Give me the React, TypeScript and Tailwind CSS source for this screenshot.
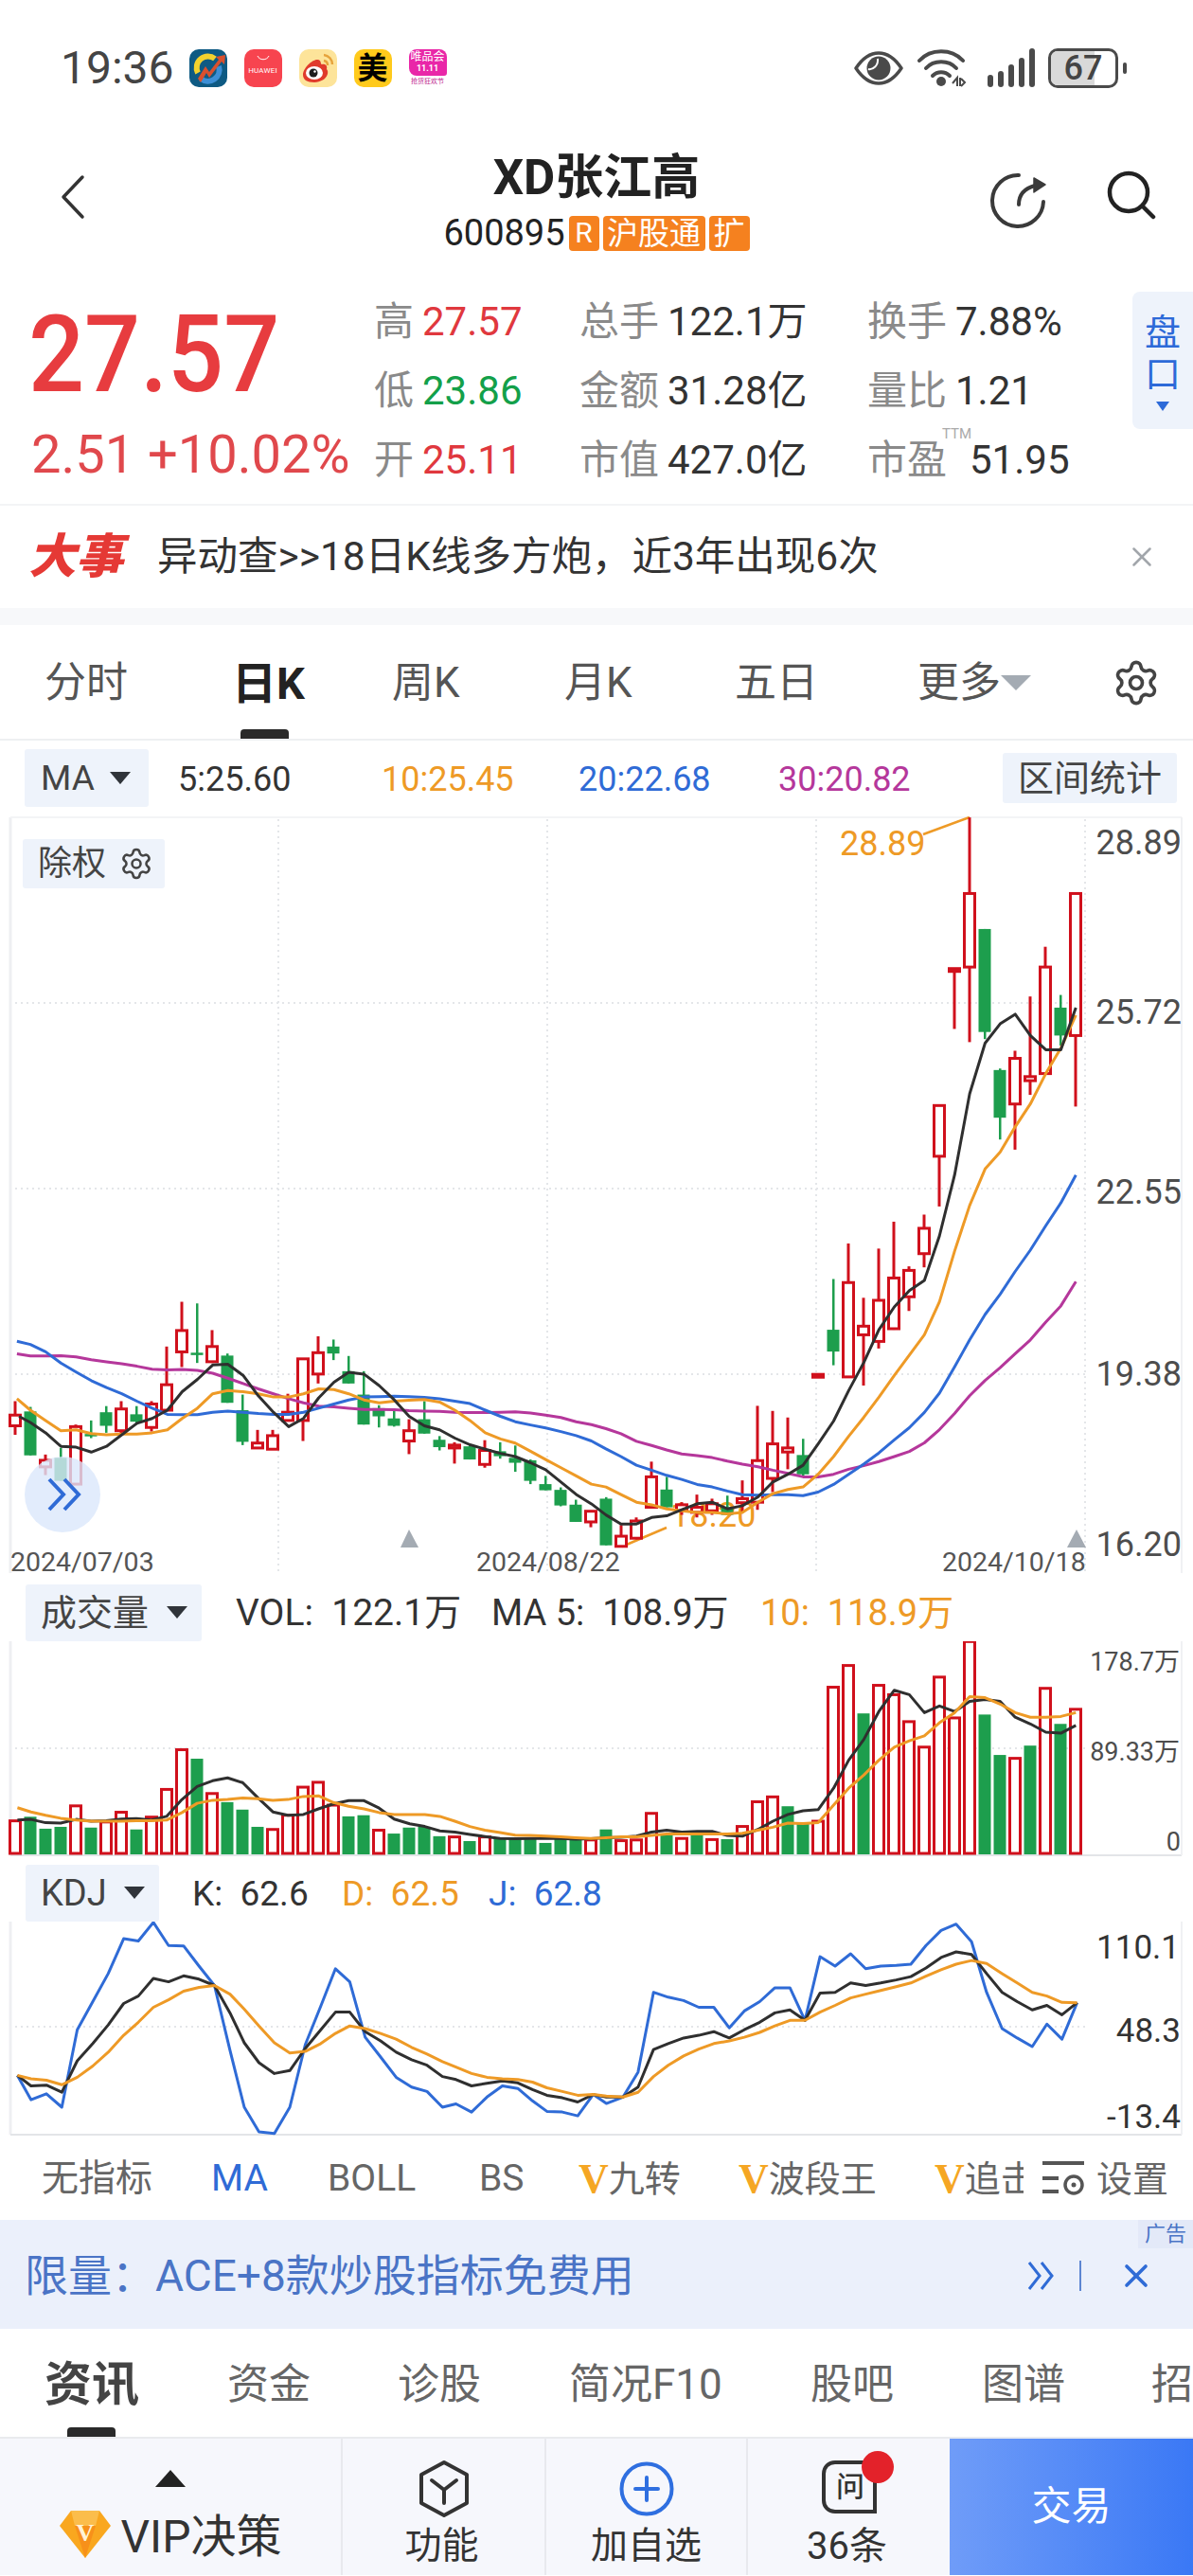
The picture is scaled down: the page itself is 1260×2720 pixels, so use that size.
import React from 'react';
import { Settings, X } from 'lucide-react';

type Pt = [number, number];
type Candle = ['r' | 'g', number, number, number, number];

const RED = '#d0101c';
const GREEN = '#1d9e4d';
const BLACK = '#2f2f2f';
const ORANGE = '#ee9a26';
const BLUE = '#2f6bd6';
const PURPLE = '#b5379b';

// measured from crops of the picture, converted to page pixels below
const z3 = (p: Pt): Pt => [p[0] / 2.24, 1000 + p[1] / 2.306];
const z4 = (p: Pt): Pt => [620 + p[0] / 2.45, 840 + p[1] / 1.867];
const z5 = (p: Pt): Pt => [p[0] / 2.45, 1660 + p[1] / 2.53];
const z6 = (p: Pt): Pt => [620 + p[0] / 2.45, 1660 + p[1] / 2.53];

const joinLeft = (left: Pt[], right: Pt[]) => {
  const a = left.filter((p) => p[0] <= 1400).map(z3);
  const b = right.filter((p) => p[0] >= 49).map(z4);
  return [...a, ...b];
};
const joinLow = (left: Pt[], right: Pt[]) => {
  const a = left.filter((p) => p[0] <= 1536).map(z5);
  const b = right.filter((p) => p[0] >= 49).map(z6);
  return [...a, ...b];
};

const candlesLeft: Candle[] = [
  ['r', 1108, 1190, 1142, 1168], ['g', 1122, 1240, 1133, 1240], ['r', 1238, 1288, 1252, 1268], ['g', 1222, 1302, 1246, 1302],
  ['r', 1165, 1310, 1170, 1310], ['g', 1155, 1198, 1188, 1192], ['g', 1120, 1185, 1135, 1168], ['r', 1108, 1190, 1127, 1180],
  ['g', 1120, 1165, 1140, 1158], ['r', 1108, 1182, 1115, 1172], ['r', 975, 1130, 1068, 1130], ['r', 866, 1025, 936, 988],
  ['g', 870, 1015, 990, 995], ['r', 935, 1015, 975, 1012], ['g', 992, 1112, 997, 1112], ['g', 1092, 1215, 1130, 1207],
  ['r', 1178, 1222, 1210, 1222], ['r', 1178, 1225, 1192, 1225], ['r', 1090, 1155, 1135, 1155], ['r', 1005, 1205, 1005, 1155],
  ['r', 950, 1065, 990, 1042], ['g', 958, 1008, 975, 992], ['g', 998, 1065, 1035, 1065], ['g', 1035, 1165, 1092, 1165],
  ['g', 1118, 1172, 1125, 1145], ['g', 1132, 1170, 1150, 1168], ['r', 1152, 1237, 1180, 1205], ['g', 1108, 1187, 1152, 1187],
  ['g', 1193, 1228, 1202, 1220], ['r', 1208, 1260, 1215, 1222], ['g', 1215, 1250, 1218, 1250], ['r', 1203, 1270, 1228, 1262],
  ['g', 1208, 1248, 1230, 1242], ['g', 1216, 1280, 1246, 1258], ['g', 1250, 1310, 1252, 1302], ['g', 1290, 1325, 1310, 1325],
  ['g', 1318, 1364, 1324, 1362], ['g', 1348, 1402, 1360, 1402], ['r', 1376, 1415, 1376, 1402],
];

const candlesRight: Candle[] = [
  ['g', 1385, 1480, 1388, 1480], ['r', 1440, 1482, 1462, 1482], ['r', 1425, 1468, 1432, 1466], ['r', 1315, 1405, 1345, 1405],
  ['g', 1345, 1405, 1370, 1405], ['r', 1395, 1420, 1400, 1412], ['r', 1380, 1425, 1405, 1415], ['r', 1388, 1420, 1398, 1412],
  ['g', 1382, 1420, 1405, 1420], ['r', 1352, 1415, 1388, 1396], ['r', 1205, 1410, 1313, 1395], ['r', 1215, 1375, 1280, 1348],
  ['r', 1228, 1330, 1288, 1296], ['g', 1270, 1345, 1302, 1340], ['r', 1143, 1148, 1143, 1148], ['g', 955, 1125, 1055, 1098],
  ['r', 885, 1148, 962, 1148], ['r', 992, 1165, 1048, 1065], ['r', 895, 1092, 997, 1078], ['r', 842, 1055, 953, 1053],
  ['r', 930, 1018, 938, 990], ['r', 828, 932, 855, 905], ['r', 613, 812, 613, 713], ['r', 343, 462, 343, 347],
  ['r', 45, 488, 195, 340], ['g', 265, 482, 265, 468], ['g', 540, 680, 543, 637], ['r', 505, 700, 520, 610],
  ['r', 398, 592, 556, 564], ['r', 300, 552, 340, 550], ['g', 395, 495, 420, 475], ['r', 195, 615, 195, 475],
];

const candles = [
  ...candlesLeft.map((c) => [c[0], ...c.slice(1).map((y) => 1000 + (y as number) / 2.306)] as Candle),
  ...candlesRight.map((c) => [c[0], ...c.slice(1).map((y) => 840 + (y as number) / 1.867)] as Candle),
];

const ma5 = joinLeft(
  [[45,1145],[72,1160],[108,1185],[144,1218],[180,1220],[216,1232],[252,1218],[288,1190],[324,1162],[360,1150],[396,1130],[431,1085],[467,1055],[503,1020],[539,1018],[575,1045],[611,1095],[647,1135],[683,1170],[718,1150],[754,1100],[790,1062],[825,1038],[861,1042],[897,1070],[933,1105],[968,1145],[1004,1168],[1040,1178],[1076,1198],[1112,1214],[1148,1225],[1184,1235],[1219,1243],[1255,1258],[1291,1275],[1327,1305],[1363,1335],[1399,1358]],
  [[49,1420],[88,1438],[128,1438],[167,1425],[206,1422],[245,1410],[285,1398],[324,1395],[363,1408],[402,1402],[442,1385],[481,1355],[520,1340],[559,1322],[598,1280],[638,1235],[677,1175],[716,1120],[755,1055],[795,1010],[834,978],[873,958],[912,870],[951,750],[990,590],[1030,490],[1069,452],[1108,433],[1147,475],[1187,503],[1226,503],[1265,420]],
);
const ma10 = joinLeft(
  [[40,1102],[72,1130],[108,1155],[144,1180],[180,1178],[216,1187],[252,1190],[288,1188],[324,1188],[360,1185],[396,1178],[431,1150],[467,1125],[503,1090],[539,1082],[575,1085],[611,1090],[647,1098],[683,1098],[718,1090],[754,1078],[790,1080],[825,1090],[861,1105],[897,1112],[933,1108],[968,1106],[1004,1104],[1040,1110],[1076,1130],[1112,1155],[1148,1185],[1184,1200],[1219,1210],[1255,1230],[1291,1250],[1327,1270],[1363,1290],[1399,1310]],
  [[49,1365],[88,1380],[128,1395],[167,1400],[206,1408],[245,1412],[285,1415],[324,1415],[363,1418],[402,1415],[442,1395],[481,1378],[520,1370],[559,1365],[598,1340],[638,1305],[677,1265],[716,1228],[755,1188],[795,1145],[834,1105],[873,1065],[912,1000],[951,900],[990,810],[1030,738],[1069,705],[1108,655],[1147,610],[1187,550],[1226,500],[1265,435]],
);
const ma20 = joinLeft(
  [[40,962],[72,970],[108,988],[144,1015],[180,1037],[216,1058],[252,1075],[288,1090],[324,1108],[360,1125],[396,1140],[431,1141],[467,1141],[503,1135],[539,1132],[575,1135],[611,1138],[647,1140],[683,1140],[718,1135],[754,1125],[790,1115],[825,1105],[861,1098],[897,1097],[933,1096],[968,1097],[1004,1099],[1040,1102],[1076,1108],[1112,1114],[1148,1130],[1184,1145],[1219,1158],[1255,1166],[1291,1173],[1327,1182],[1363,1192],[1399,1205]],
  [[49,1290],[88,1305],[128,1322],[167,1332],[206,1342],[245,1350],[285,1360],[324,1365],[363,1373],[402,1380],[442,1381],[481,1380],[520,1380],[559,1382],[598,1375],[638,1360],[677,1340],[716,1320],[755,1298],[795,1272],[834,1248],[873,1218],[912,1180],[951,1128],[990,1075],[1030,1025],[1069,985],[1108,940],[1147,898],[1187,850],[1226,805],[1265,750]],
);
const ma30 = joinLeft(
  [[40,993],[72,998],[108,998],[144,997],[180,1000],[216,1007],[252,1012],[288,1017],[324,1023],[360,1030],[396,1032],[431,1031],[467,1033],[503,1040],[539,1052],[575,1065],[611,1078],[647,1090],[683,1102],[718,1112],[754,1120],[790,1122],[825,1125],[861,1128],[897,1128],[933,1129],[968,1131],[1004,1132],[1040,1133],[1076,1135],[1112,1136],[1148,1136],[1184,1135],[1219,1134],[1255,1137],[1291,1142],[1327,1148],[1363,1158],[1399,1165]],
  [[49,1250],[88,1260],[128,1275],[167,1283],[206,1292],[245,1300],[285,1303],[324,1307],[363,1314],[402,1320],[442,1325],[481,1332],[520,1338],[559,1345],[598,1345],[638,1340],[677,1330],[716,1323],[755,1315],[795,1305],[834,1295],[873,1278],[912,1252],[951,1220],[990,1185],[1030,1155],[1069,1130],[1108,1102],[1147,1075],[1187,1040],[1226,1008],[1265,960]],
);

// 'r' bars are hollow, 'g' are filled
const volumes: ['r' | 'g', number][] = [
  ['r',667],['g',656],['g',688],['g',683],['r',627],['g',685],['r',670],['r',644],['g',690],['r',657],['r',583],['r',477],['g',501],['r',594],['g',617],['g',637],['g',683],['r',690],['r',652],['r',577],['r',564],['r',625],['g',655],['g',652],['r',692],['g',701],['g',685],['g',683],['g',708],['r',710],['g',721],['r',710],['g',712],['g',715],['g',712],['g',726],['g',716],['g',716],['r',718],['g',690],
  ['r',720],['r',718],['r',647],['g',705],['r',714],['g',705],['r',717],['g',716],['r',682],['r',616],['r',603],['g',628],['g',672],['r',668],['r',310],['r',252],['g',380],['r',305],['r',330],['r',402],['r',470],['r',283],['r',392],['r',188],['g',383],['g',491],['r',500],['g',466],['r',313],['g',408],['r',369],
];

const volMa5 = joinLow(
  [[45,665],[80,663],[118,672],[157,673],[197,663],[236,668],[275,667],[314,662],[353,661],[392,665],[431,655],[471,610],[510,575],[550,560],[589,552],[628,565],[667,605],[706,643],[745,652],[785,650],[824,635],[863,622],[902,613],[942,613],[981,633],[1020,662],[1060,675],[1099,682],[1138,694],[1177,697],[1216,703],[1255,709],[1294,714],[1333,715],[1372,714],[1412,714],[1451,714],[1490,716],[1529,715]],
  [[49,712],[88,711],[128,708],[167,697],[206,692],[245,697],[285,695],[324,695],[363,706],[402,708],[442,690],[481,668],[520,650],[559,640],[598,637],[638,580],[677,505],[716,450],[755,375],[795,318],[834,330],[873,378],[912,360],[951,375],[990,348],[1030,343],[1069,348],[1108,390],[1147,408],[1187,430],[1226,433],[1265,412]],
);
const volMa10 = joinLow(
  [[45,632],[80,643],[118,652],[157,660],[197,665],[236,668],[275,668],[314,668],[353,667],[392,667],[431,665],[471,645],[510,620],[550,612],[589,610],[628,606],[667,608],[706,612],[745,610],[785,602],[824,600],[863,618],[902,628],[942,635],[981,645],[1020,650],[1060,650],[1099,650],[1138,655],[1177,668],[1216,682],[1255,692],[1294,698],[1333,705],[1372,706],[1412,708],[1451,710],[1490,712],[1529,714]],
  [[49,712],[88,710],[128,710],[167,706],[206,702],[245,702],[285,702],[324,702],[363,702],[402,700],[442,692],[481,684],[520,673],[559,674],[598,672],[638,625],[677,580],[716,545],[755,505],[795,470],[834,453],[873,440],[912,405],[951,378],[990,335],[1030,338],[1069,355],[1108,378],[1147,390],[1187,390],[1226,388],[1265,378]],
);

const kdjK = joinLow(
  [[45,1347],[80,1375],[120,1373],[160,1392],[200,1308],[240,1262],[280,1212],[320,1155],[358,1135],[397,1088],[436,1097],[475,1081],[515,1090],[555,1107],[595,1180],[632,1260],[670,1313],[710,1342],[750,1334],[790,1275],[830,1225],[868,1178],[905,1178],[945,1230],[985,1255],[1025,1285],[1065,1305],[1105,1320],[1145,1350],[1180,1358],[1220,1375],[1260,1368],[1300,1362],[1340,1367],[1378,1385],[1415,1400],[1455,1407],[1495,1418],[1535,1398]],
  [[50,1405],[93,1405],[132,1378],[172,1278],[210,1262],[250,1247],[289,1240],[328,1230],[368,1247],[407,1225],[447,1205],[486,1180],[525,1172],[564,1200],[603,1127],[642,1125],[682,1100],[721,1107],[760,1100],[800,1092],[838,1083],[877,1060],[916,1032],[955,1017],[995,1024],[1034,1075],[1074,1125],[1113,1150],[1152,1172],[1190,1160],[1229,1185],[1268,1153]],
);
const kdjD = joinLow(
  [[45,1347],[80,1356],[120,1360],[160,1372],[200,1352],[240,1322],[280,1285],[320,1240],[358,1205],[397,1165],[436,1145],[475,1122],[515,1112],[555,1107],[595,1130],[632,1170],[670,1215],[710,1260],[750,1287],[790,1283],[830,1262],[868,1235],[905,1215],[945,1222],[985,1235],[1025,1250],[1065,1272],[1105,1290],[1145,1310],[1180,1325],[1220,1342],[1260,1352],[1300,1356],[1340,1358],[1378,1365],[1415,1380],[1455,1390],[1495,1400],[1535,1398]],
  [[50,1402],[93,1405],[132,1392],[172,1350],[210,1320],[250,1295],[289,1277],[328,1262],[368,1255],[407,1245],[447,1232],[486,1215],[525,1200],[564,1200],[603,1178],[642,1160],[682,1140],[721,1130],[760,1120],[800,1110],[838,1100],[877,1082],[916,1065],[955,1050],[995,1040],[1034,1048],[1074,1075],[1113,1100],[1152,1125],[1190,1135],[1229,1152],[1268,1153]],
);
const kdjJ = joinLow(
  [[45,1347],[80,1412],[120,1396],[160,1432],[200,1225],[240,1150],[280,1075],[320,982],[358,988],[397,938],[436,1000],[475,1001],[515,1055],[555,1107],[595,1280],[632,1432],[670,1498],[710,1502],[750,1432],[790,1265],[830,1162],[868,1062],[905,1097],[945,1245],[985,1298],[1025,1352],[1065,1378],[1105,1390],[1145,1432],[1180,1423],[1220,1445],[1260,1405],[1300,1375],[1340,1382],[1378,1415],[1415,1443],[1455,1445],[1495,1455],[1535,1398]],
  [[50,1422],[93,1405],[132,1338],[172,1125],[210,1138],[250,1147],[289,1165],[328,1165],[368,1220],[407,1175],[447,1150],[486,1113],[525,1113],[564,1200],[603,1030],[642,1055],[682,1022],[721,1062],[760,1055],[800,1053],[838,1050],[877,1000],[916,960],[955,943],[995,990],[1034,1125],[1074,1222],[1113,1247],[1152,1270],[1190,1210],[1229,1250],[1268,1153]],
);

const Line = ({ pts, color, w = 3 }: { pts: Pt[]; color: string; w?: number }) => (
  <polyline
    points={pts.map((p) => `${p[0].toFixed(1)},${p[1].toFixed(1)}`).join(' ')}
    fill="none"
    stroke={color}
    strokeWidth={w}
    strokeLinejoin="round"
  />
);

const Dotted = ({ x1, y1, x2, y2 }: { x1: number; y1: number; x2: number; y2: number }) => (
  <line x1={x1} y1={y1} x2={x2} y2={y2} stroke="#e4e6e9" strokeWidth={2} strokeDasharray="2 4" />
);

const CandleMark = ({ c, i }: { c: Candle; i: number }) => {
  const x = 16 + 16 * i;
  const [kind, high, low, top, bottom] = c;
  if (kind === 'g') {
    return (
      <g fill={GREEN}>
        <rect x={x - 1} y={high} width={2.5} height={low - high} />
        <rect x={x - 6.5} y={top} width={13} height={Math.max(bottom - top, 2.5)} />
      </g>
    );
  }
  return (
    <g>
      <line x1={x} x2={x} y1={high} y2={low} stroke={RED} strokeWidth={3} />
      <rect x={x - 5.5} y={top} width={11} height={Math.max(bottom - top, 3)} fill="#fff" stroke={RED} strokeWidth={3} />
    </g>
  );
};

const MainChart = () => (
  <svg viewBox="0 862 1260 806" width={1260} height={806} className="block">
    <line x1={11} y1={864} x2={11} y2={1662} stroke="#eeeff2" strokeWidth={3} />
    <line x1={11} y1={864} x2={1248} y2={864} stroke="#f3f4f6" strokeWidth={2} />
    <line x1={1248} y1={864} x2={1248} y2={1662} stroke="#f0f1f3" strokeWidth={2} />
    {[294, 578, 862, 1146].map((x) => (
      <Dotted key={x} x1={x} y1={866} x2={x} y2={1662} />
    ))}
    {[1060, 1256, 1452].map((y) => (
      <Dotted key={y} x1={16} y1={y} x2={1146} y2={y} />
    ))}
    <text x={708} y={1613} fontSize={36} fill={ORANGE}>18.20</text>
    <polyline points="657,1634 704,1614" fill="none" stroke={ORANGE} strokeWidth={2.5} />
    <polyline points="975,882 1024,864" fill="none" stroke={ORANGE} strokeWidth={2.5} />
    <text x={887} y={904} fontSize={36} fill={ORANGE}>28.89</text>
    {candles.map((c, i) => (
      <CandleMark key={i} c={c} i={i} />
    ))}
    <Line pts={ma30} color={PURPLE} />
    <Line pts={ma20} color={BLUE} />
    <Line pts={ma10} color={ORANGE} />
    <Line pts={ma5} color={BLACK} />
    <circle cx={66} cy={1579} r={40} fill="#dbe7fb" fillOpacity={0.8} />
    <polyline points="52,1563 67,1579 52,1595" fill="none" stroke={BLUE} strokeWidth={4} />
    <polyline points="68,1563 83,1579 68,1595" fill="none" stroke={BLUE} strokeWidth={4} />
    <polygon points="432,1616 442,1635 423,1635" fill="#a4abb3" />
    <polygon points="1137,1616 1147,1635 1127,1635" fill="#a4abb3" />
    <g fill="#555" fontSize={28.5}>
      <text x={11} y={1660}>2024/07/03</text>
      <text x={503} y={1660}>2024/08/22</text>
      <text x={995} y={1660}>2024/10/18</text>
    </g>
    <g fill="#4d4d4d" fontSize={36} textAnchor="end">
      <text x={1248} y={903}>28.89</text>
      <text x={1248} y={1082}>25.72</text>
      <text x={1248} y={1272}>22.55</text>
      <text x={1248} y={1464}>19.38</text>
      <text x={1248} y={1644}>16.20</text>
    </g>
  </svg>
);

const VolumeChart = () => (
  <svg viewBox="0 1734 1260 228" width={1260} height={228} className="block">
    <line x1={11} y1={1734} x2={11} y2={1960} stroke="#eeeff2" strokeWidth={3} />
    <line x1={11} y1={1960} x2={1248} y2={1960} stroke="#e3e5e8" strokeWidth={2} />
    <line x1={1248} y1={1734} x2={1248} y2={1960} stroke="#f0f1f3" strokeWidth={2} />
    <Dotted x1={16} y1={1847} x2={1146} y2={1847} />
    {volumes.map(([kind, top], i) => {
      const x = 16 + 16 * i;
      const y = 1660 + top / 2.53;
      return kind === 'g' ? (
        <rect key={i} x={x - 6.5} y={y} width={13} height={1959 - y} fill={GREEN} />
      ) : (
        <rect key={i} x={x - 5.5} y={y} width={11} height={1958 - y} fill="#fff" stroke={RED} strokeWidth={3} />
      );
    })}
    <Line pts={volMa5} color={BLACK} />
    <Line pts={volMa10} color={ORANGE} />
    <g fill="#4d4d4d" fontSize={27} textAnchor="end" fontFamily="Roboto, 'Noto Sans CJK SC', sans-serif">
      <text x={1246} y={1765}>178.7万</text>
      <text x={1246} y={1860}>89.33万</text>
      <text x={1247} y={1955}>0</text>
    </g>
  </svg>
);

const KdjChart = () => (
  <svg viewBox="0 2030 1260 228" width={1260} height={228} className="block">
    <line x1={11} y1={2030} x2={11} y2={2255} stroke="#eeeff2" strokeWidth={3} />
    <line x1={11} y1={2255} x2={1248} y2={2255} stroke="#e3e5e8" strokeWidth={2} />
    <line x1={1248} y1={2030} x2={1248} y2={2255} stroke="#f0f1f3" strokeWidth={2} />
    <Dotted x1={16} y1={2141} x2={1146} y2={2141} />
    <Line pts={kdjJ} color={BLUE} />
    <Line pts={kdjK} color={BLACK} />
    <Line pts={kdjD} color={ORANGE} />
    <g fill="#333" fontSize={35} textAnchor="end">
      <text x={1246} y={2069}>110.1</text>
      <text x={1247} y={2157}>48.3</text>
      <text x={1247} y={2248}>-13.4</text>
    </g>
  </svg>
);

const StockAppIcon = () => (
  <svg width={40} height={40} viewBox="0 0 40 40">
    <rect width={40} height={40} rx={10} fill="#0e5a83" />
    <path d="M9 25 A12 12 0 0 1 27 10" fill="none" stroke="#f2d22e" strokeWidth={6} />
    <path d="M31 18 A12 12 0 0 1 12 31" fill="none" stroke="#3d8fd6" strokeWidth={6} />
    <path d="M9 31 L17 18 L21 24 L31 11 L28 8 L38 6 L37 16 L34 13 L21 30 L18 25 L12 35 Z" fill="#d9502e" />
  </svg>
);

const WeiboIcon = () => (
  <svg width={40} height={40} viewBox="0 0 40 40">
    <rect width={40} height={40} rx={10} fill="#fde49a" />
    <path d="M26 6 A10 10 0 0 1 35 16" fill="none" stroke="#e6a33c" strokeWidth={2.5} />
    <path d="M26 12 A5 5 0 0 1 30 17" fill="none" stroke="#e6a33c" strokeWidth={2.5} />
    <path d="M4 27 C4 20 14 10 20 11 C24 12 22 16 24 16 C28 15 30 18 29 21 C32 24 30 34 16 35 C8 35 4 32 4 27 Z" fill="#e03a2b" />
    <ellipse cx={16} cy={25} rx={9} ry={7} fill="#fff" />
    <circle cx={15} cy={25} r={4.5} fill="#1d1d1d" />
    <circle cx={16.5} cy={23.5} r={1.2} fill="#fff" />
  </svg>
);

const AppIcons = () => (
  <div className="ml-[16px] flex gap-[18px]">
    <StockAppIcon />
    <div className="flex h-[40px] w-[40px] flex-col items-center rounded-[10px] bg-[#f7444f] pt-[6px] text-white">
      <svg width={14} height={7} viewBox="0 0 14 7">
        <path d="M1 1 C3 6 11 6 13 1" fill="none" stroke="#fff" strokeWidth={1} />
      </svg>
      <span className="mt-[6px] text-[8px] leading-none tracking-[0.2px]">HUAWEI</span>
    </div>
    <WeiboIcon />
    <div className="flex h-[40px] w-[40px] items-center justify-center rounded-[10px] bg-[#ffca1c] text-[32px] font-bold leading-none text-black">美</div>
    <div className="flex h-[40px] w-[40px] flex-col items-center bg-white">
      <div className="flex h-[28px] w-full flex-col items-center rounded-[8px] rounded-br-[3px] bg-[#e927a8] pt-[2px] text-[12px] leading-[13px] text-white">
        <span>唯品会</span>
        <span className="text-[9px] font-bold leading-[10px]">11.11</span>
      </div>
      <span className="mt-[2px] whitespace-nowrap text-[7px] leading-[8px] text-[#c0278f]">抢货狂欢节</span>
    </div>
  </div>
);

const StatusIcons = () => (
  <div className="ml-auto mr-[70px] flex items-center">
    <svg width={52} height={36} viewBox="0 0 52 36">
      <path d="M2 18 C10 6 18 2 26 2 C34 2 42 6 50 18 C42 30 34 34 26 34 C18 34 10 30 2 18 Z" fill="none" stroke="#4a4a4a" strokeWidth={3.5} strokeLinejoin="round" />
      <circle cx={26} cy={18} r={12.5} fill="#4a4a4a" />
      <path d="M15 19 C20 20 26 15 25 8" fill="none" stroke="#fff" strokeWidth={2} />
    </svg>
    <svg width={52} height={42} viewBox="0 0 52 42" className="ml-[15px]">
      <g fill="none" stroke="#4a4a4a" strokeWidth={4} strokeLinecap="round">
        <path d="M2 13 C14 0 36 0 48 13" />
        <path d="M9 21 C17 12 33 12 41 21" />
        <path d="M16 29 C21 24 29 24 34 29" />
      </g>
      <circle cx={25} cy={35} r={5} fill="#4a4a4a" />
      <path d="M37 37 L42 31 L42 40 M45 31 L45 40 M46 32 L50 36 L46 40" fill="none" stroke="#4a4a4a" strokeWidth={2} />
    </svg>
    <svg width={52} height={42} viewBox="0 0 52 42" className="ml-[21px]">
      <g stroke="#4a4a4a" strokeWidth={6} strokeLinecap="round">
        <line x1={4} y1={31} x2={4} y2={38} />
        <line x1={15} y1={27} x2={15} y2={38} />
        <line x1={26} y1={20} x2={26} y2={38} />
        <line x1={37} y1={13} x2={37} y2={38} />
        <line x1={48} y1={3} x2={48} y2={38} />
      </g>
    </svg>
    <div className="relative ml-[13px] flex h-[42px] w-[74px] items-center justify-center overflow-hidden rounded-[10px] border-[3px] border-[#4a4a4a] text-[36px] font-medium leading-none text-[#444]">
      <span className="absolute inset-y-0 left-0 w-[67%] bg-[#d9d9d9]" />
      <span className="relative">67</span>
    </div>
    <div className="ml-[5px] h-[12px] w-[4px] rounded-full bg-[#4a4a4a]" />
  </div>
);

const StatusBar = () => (
  <div className="flex h-[144px] items-center pl-[64px]">
    <span className="text-[48px] leading-none text-[#444]">19:36</span>
    <AppIcons />
    <StatusIcons />
  </div>
);

const Header = () => (
  <div className="grid h-[140px] grid-cols-[1fr_auto_1fr]">
    <div className="flex items-start pl-[64px] pt-[40px]">
      <svg width={26} height={48} viewBox="0 0 26 48" fill="none" stroke="#333" strokeWidth={3.5} strokeLinecap="round" strokeLinejoin="round">
        <polyline points="23,3 3,24 23,45" />
      </svg>
    </div>
    <div className="flex flex-col items-center pt-[16px]">
      <div className="text-[51px] font-bold leading-[56px] text-[#222]">XD张江高</div>
      <div className="mt-[10px] flex items-center gap-[4px]">
        <span className="text-[38px] leading-[40px] text-[#222]">600895</span>
        <span className="flex h-[37px] w-[32px] items-center justify-center rounded-[4px] bg-[#f5811f] text-[30px] leading-none text-white">R</span>
        <span className="flex h-[37px] w-[108px] items-center justify-center rounded-[4px] bg-[#f5811f] text-[33px] leading-none text-white">沪股通</span>
        <span className="flex h-[37px] w-[43px] items-center justify-center rounded-[4px] bg-[#f5811f] text-[33px] leading-none text-white">扩</span>
      </div>
    </div>
    <div className="flex items-start justify-end pr-[36px] pt-[36px]">
      <svg width={62} height={62} viewBox="0 0 62 62" className="mr-[60px]" fill="none" stroke="#3a3a3a" strokeWidth={4} strokeLinecap="round">
        <path d="M30 5 A27 27 0 1 0 56 33" />
        <path d="M30 36 C30 25 36 19 47 16" />
        <path d="M46 8 L58 15 L46 23 Z" fill="#3a3a3a" strokeWidth={1.5} strokeLinejoin="round" />
      </svg>
      <svg width={56} height={52} viewBox="0 0 56 52" fill="none" stroke="#222" strokeWidth={4.5} strokeLinecap="round">
        <circle cx={24} cy={23} r={20} />
        <line x1={39} y1={38} x2={50} y2={49} />
      </svg>
    </div>
  </div>
);

const statRows = [
  [
    { label: '高', value: '27.57', color: 'text-[#e0383e]' },
    { label: '总手', value: '122.1万', color: 'text-[#333]' },
    { label: '换手', value: '7.88%', color: 'text-[#333]' },
  ],
  [
    { label: '低', value: '23.86', color: 'text-[#13a04a]' },
    { label: '金额', value: '31.28亿', color: 'text-[#333]' },
    { label: '量比', value: '1.21', color: 'text-[#333]' },
  ],
  [
    { label: '开', value: '25.11', color: 'text-[#e0383e]' },
    { label: '市值', value: '427.0亿', color: 'text-[#333]' },
    { label: '市盈', value: '51.95', color: 'text-[#333]', ttm: true },
  ],
];

const Quote = () => (
  <div className="flex h-[248px]">
    <div className="w-[395px] pl-[30px] pt-[32px]">
      <div className="origin-top-left scale-y-[1.08] text-[104px] font-medium leading-[110px] text-[#e73c3f]">27.57</div>
      <div className="ml-[3px] mt-[22px] whitespace-nowrap text-[56px] leading-[64px] text-[#e0484c]">2.51 +10.02%</div>
    </div>
    <div className="w-[801px] pt-[19px]">
      {statRows.map((row, r) => (
        <div key={r} className="grid h-[73px] grid-cols-[217px_304px_1fr] items-center">
          {row.map((s) => (
            <div key={s.label} className="relative flex items-center gap-[9px]">
              <span className="text-[42px] leading-none text-[#8a8a8a]">{s.label}</span>
              {s.ttm && <span className="absolute left-[79px] top-[-14px] text-[15px] leading-none text-[#aaa]">TTM</span>}
              <span className={`text-[42px] leading-none ${s.color} ${s.ttm ? 'ml-[15px]' : ''}`}>{s.value}</span>
            </div>
          ))}
        </div>
      ))}
    </div>
    <div className="mt-[24px] flex h-[145px] w-[64px] flex-col items-center rounded-l-[8px] bg-[#eef3fb] pt-[20px] text-[#2d6ad8]">
      <span className="text-[38px] leading-[46px]">盘</span>
      <span className="text-[38px] leading-[42px]">口</span>
      <svg width={14} height={10} viewBox="0 0 14 10" className="mt-[8px]">
        <polygon points="0,0 14,0 7,10" fill="#2d6ad8" />
      </svg>
    </div>
  </div>
);

const Notice = () => (
  <div>
    <div className="flex h-[110px] items-center border-t-2 border-[#f3f4f6] pl-[30px]">
      <span className="text-[50px] font-black italic leading-none text-[#e53935]">大事</span>
      <span className="ml-[36px] text-[42.5px] leading-none text-[#333]">异动查&gt;&gt;18日K线多方炮，近3年出现6次</span>
      <X size={34} strokeWidth={1.8} className="ml-auto mr-[37px] text-[#a2a6ab]" />
    </div>
    <div className="h-[18px] bg-[#f7f8fa]" />
  </div>
);

const periods = [
  { label: '分时', w: 'w-[198px]' },
  { label: '日K', w: 'w-[169px]', active: true },
  { label: '周K', w: 'w-[182px]' },
  { label: '月K', w: 'w-[180px]' },
  { label: '五日', w: 'w-[193px]' },
];

const PeriodTabs = () => (
  <div className="relative flex h-[122px] items-center border-b-2 border-[#eef0f2] pl-[47px] pt-[2px]">
    {periods.map((p) => (
      <span key={p.label} className={`${p.w} leading-none ${p.active ? 'text-[47px] font-bold text-[#222]' : 'text-[44px] text-[#555]'}`}>
        {p.label}
      </span>
    ))}
    <span className="text-[44px] leading-none text-[#555]">更多</span>
    <svg width={32} height={16} viewBox="0 0 32 16">
      <polygon points="0,0 32,0 16,16" fill="#a4abb3" />
    </svg>
    <Settings size={52} strokeWidth={1.7} className="ml-auto mr-[34px] text-[#444]" />
    <div className="absolute bottom-0 left-[254px] h-[10px] w-[51px] rounded-t-[4px] bg-[#2a2a2a]" />
  </div>
);

const Caret = ({ w = 22 }: { w?: number }) => (
  <svg width={w} height={w * 0.6} viewBox="0 0 22 13">
    <polygon points="0,0 22,0 11,13" fill="#30343a" />
  </svg>
);

const MaRow = () => (
  <div className="flex h-[79px] items-center pl-[26px] pr-[17px]">
    <div className="flex h-[61px] w-[131px] items-center gap-[16px] rounded-[3px] bg-[#eef3fb] pl-[17px]">
      <span className="text-[37px] leading-none text-[#444]">MA</span>
      <Caret />
    </div>
    <span className="ml-[31px] mt-[3px] w-[215px] text-[36px] leading-none text-[#333]">5:25.60</span>
    <span className="mt-[3px] w-[208px] text-[36px] leading-none text-[#ee9a26]">10:25.45</span>
    <span className="mt-[3px] w-[211px] text-[36px] leading-none text-[#2f6bd6]">20:22.68</span>
    <span className="mt-[3px] text-[36px] leading-none text-[#b5379b]">30:20.82</span>
    <div className="ml-auto flex h-[53px] w-[184px] items-center justify-center rounded-[3px] bg-[#eef3fb] text-[38px] leading-none text-[#444]">区间统计</div>
  </div>
);

const IndexHeader = ({ h, name, w, children }: { h: string; name: string; w: string; children: React.ReactNode }) => (
  <div className={`flex items-end pl-[27px] ${h}`}>
    <div className={`flex h-[60px] items-center justify-between rounded-[3px] bg-[#eef3fb] pl-[16px] pr-[15px] ${w}`}>
      <span className="text-[38px] leading-none text-[#444]">{name}</span>
      <Caret />
    </div>
    {children}
  </div>
);

const indicators = [
  { label: '无指标', w: 'w-[179px]' },
  { label: 'MA', w: 'w-[123px]', on: true },
  { label: 'BOLL', w: 'w-[160px]' },
  { label: 'BS', w: 'w-[105px]' },
];

const IndicatorRow = () => (
  <div className="flex h-[87px] items-center pl-[44px]">
    {indicators.map((t) => (
      <span key={t.label} className={`${t.w} text-[39px] leading-none ${t.on ? 'text-[#2f6bd6]' : 'text-[#666]'}`}>
        {t.label}
      </span>
    ))}
    <div className="flex w-[169px] items-center">
      <span className="font-['Liberation_Serif',serif] text-[44px] font-bold leading-none text-[#f5a623]">V</span>
      <span className="whitespace-nowrap text-[38px] leading-none text-[#666]">九转</span>
    </div>
    <div className="flex w-[207px] items-center">
      <span className="font-['Liberation_Serif',serif] text-[44px] font-bold leading-none text-[#f5a623]">V</span>
      <span className="whitespace-nowrap text-[38px] leading-none text-[#666]">波段王</span>
    </div>
    <div className="flex w-[94px] items-center overflow-x-clip">
      <span className="font-['Liberation_Serif',serif] text-[44px] font-bold leading-none text-[#f5a623]">V</span>
      <span className="whitespace-nowrap text-[38px] leading-none text-[#666]">追击</span>
    </div>
    <svg width={46} height={40} viewBox="0 0 46 40" className="ml-[19px]">
      <g stroke="#555" strokeWidth={4}>
        <line x1={1} y1={3} x2={45} y2={3} />
        <line x1={1} y1={19} x2={18} y2={19} />
        <line x1={1} y1={33} x2={18} y2={33} />
      </g>
      <circle cx={34} cy={26} r={9} fill="none" stroke="#555" strokeWidth={3.5} />
      <circle cx={34} cy={26} r={2.5} fill="#555" />
    </svg>
    <span className="ml-[12px] text-[38px] leading-none text-[#666]">设置</span>
  </div>
);

const AdBar = () => (
  <div className="relative flex h-[115px] items-center bg-[#ebf0fb] pl-[26px] pt-[3px]">
    <span className="text-[46px] leading-none text-[#4a74c6]">限量：ACE+8款炒股指标免费用</span>
    <div className="absolute right-0 top-0 flex h-[30px] w-[58px] items-center justify-center bg-[#e3e9f8] text-[22px] leading-none text-[#4a74c6]">广告</div>
    <svg width={32} height={32} viewBox="0 0 32 32" className="ml-auto" fill="none" stroke="#2f6bd6" strokeWidth={3}>
      <polyline points="3,2 14,16 3,30" />
      <polyline points="16,2 27,16 16,30" />
    </svg>
    <div className="ml-[24px] h-[32px] w-[2px] bg-[#5e86d2]" />
    <X size={40} strokeWidth={2.2} className="ml-[38px] mr-[40px] text-[#2f6bd6]" />
  </div>
);

const newsTabs = [
  { label: '资讯', w: 'w-[193px]', active: true },
  { label: '资金', w: 'w-[180px]' },
  { label: '诊股', w: 'w-[181px]' },
  { label: '简况F10', w: 'w-[255px]' },
  { label: '股吧', w: 'w-[181px]' },
  { label: '图谱', w: 'w-[179px]' },
  { label: '招', w: 'w-[44px]' },
];

const NewsTabs = () => (
  <div className="relative flex h-[114px] items-center overflow-hidden pl-[47px] pt-[4px]">
    {newsTabs.map((t) => (
      <span key={t.label} className={`${t.w} shrink-0 whitespace-nowrap leading-none ${t.active ? 'text-[50px] font-bold text-[#444]' : 'text-[44px] text-[#666]'}`}>
        {t.label}
      </span>
    ))}
    <div className="absolute bottom-0 left-[71px] h-[10px] w-[51px] rounded-t-[4px] bg-[#2a2a2a]" />
  </div>
);

const Diamond = () => (
  <svg width={54} height={50} viewBox="0 0 54 50">
    <polygon points="12,0 42,0 54,16 27,50 0,16" fill="#f9a71f" />
    <polygon points="12,0 42,0 38,16 16,16" fill="#fbbd4b" />
    <polygon points="16,16 38,16 27,50" fill="#f7901a" />
    <text x={27} y={32} textAnchor="middle" fontSize={26} fontWeight={700} fontFamily="'Liberation Serif', serif" fill="#fff3d6">V</text>
  </svg>
);

const BottomBar = () => (
  <div className="flex h-[146px] border-t-2 border-[#e9ebee] bg-[#f6f7fc]">
    <div className="flex w-[360px] flex-col items-center pt-[33px]">
      <svg width={32} height={18} viewBox="0 0 32 18">
        <polygon points="16,0 32,18 0,18" fill="#222" />
      </svg>
      <div className="mt-[23px] flex items-center gap-[11px]">
        <Diamond />
        <span className="mt-[6px] text-[48px] leading-none text-[#333]">VIP决策</span>
      </div>
    </div>
    <div className="flex w-[215px] flex-col items-center border-l-2 border-[#e8e9ee] pt-[22px]">
      <svg width={56} height={62} viewBox="0 0 56 62" fill="none" stroke="#333" strokeWidth={4} strokeLinejoin="round" strokeLinecap="round">
        <path d="M28 3 L52 16 L52 46 L28 59 L4 46 L4 16 Z" />
        <path d="M15 22 L28 32 L41 22 M28 32 L28 46" />
      </svg>
      <span className="mt-[10px] pr-[4px] text-[39px] leading-none text-[#333]">功能</span>
    </div>
    <div className="flex w-[213px] flex-col items-center border-l-2 border-[#e8e9ee] pt-[24px]">
      <svg width={58} height={58} viewBox="0 0 58 58" fill="none" stroke="#2f6fe0" strokeWidth={4}>
        <circle cx={29} cy={29} r={26.5} />
        <path d="M17 29 L41 29 M29 17 L29 41" strokeLinecap="round" />
      </svg>
      <span className="mt-[12px] text-[39px] leading-none text-[#333]">加自选</span>
    </div>
    <div className="relative flex w-[215px] flex-col items-center border-l-2 border-[#e8e9ee] pt-[23px]">
      <svg width={58} height={56} viewBox="0 0 58 56" fill="none" stroke="#333" strokeWidth={4}>
        <path d="M14 2 L56 2 L56 54 L14 54 C7 54 2 49 2 42 L2 14 C2 7 7 2 14 2 Z" />
      </svg>
      <span className="absolute left-[93px] top-[36px] text-[30px] font-medium leading-none text-[#333]">问</span>
      <div className="absolute left-[120px] top-[13px] h-[34px] w-[34px] rounded-full bg-[#e3222a]" />
      <span className="mt-[15px] pr-[4px] text-[40px] leading-none text-[#333]">36条</span>
    </div>
    <div className="flex w-[257px] items-center justify-center bg-gradient-to-r from-[#6f9cf8] to-[#3a78f5] text-[42px] leading-none text-white">交易</div>
  </div>
);

export default function App() {
  return (
    <div className="h-[2720px] w-[1260px] overflow-hidden bg-white font-[family-name:Roboto,'Noto_Sans_CJK_SC',sans-serif]">
      <StatusBar />
      <Header />
      <Quote />
      <Notice />
      <PeriodTabs />
      <MaRow />
      <div className="relative">
        <MainChart />
        <div className="absolute left-[24px] top-[25px] flex h-[52px] w-[150px] items-center gap-[14px] rounded-[3px] bg-[#eef3fb] pl-[16px] text-[36px] leading-none text-[#444]">
          除权
          <Settings size={36} strokeWidth={1.7} />
        </div>
      </div>
      <IndexHeader h="h-[66px]" name="成交量" w="w-[186px]">
        <div className="ml-[36px] flex h-[60px] items-center text-[38px] leading-none">
          <span className="w-[270px] text-[39px] text-[#333]">VOL:&nbsp; 122.1万</span>
          <span className="w-[284px] text-[#333]">MA 5:&nbsp; 108.9万</span>
          <span className="text-[#ee9a26]">10:&nbsp; 118.9万</span>
        </div>
      </IndexHeader>
      <VolumeChart />
      <IndexHeader h="h-[68px]" name="KDJ" w="w-[141px]">
        <div className="ml-[35px] flex h-[60px] items-center text-[37px] leading-none">
          <span className="w-[158px] text-[#333]">K:&nbsp; 62.6</span>
          <span className="w-[155px] text-[#ee9a26]">D:&nbsp; 62.5</span>
          <span className="text-[#2f6bd6]">J:&nbsp; 62.8</span>
        </div>
      </IndexHeader>
      <KdjChart />
      <IndicatorRow />
      <AdBar />
      <NewsTabs />
      <BottomBar />
    </div>
  );
}
